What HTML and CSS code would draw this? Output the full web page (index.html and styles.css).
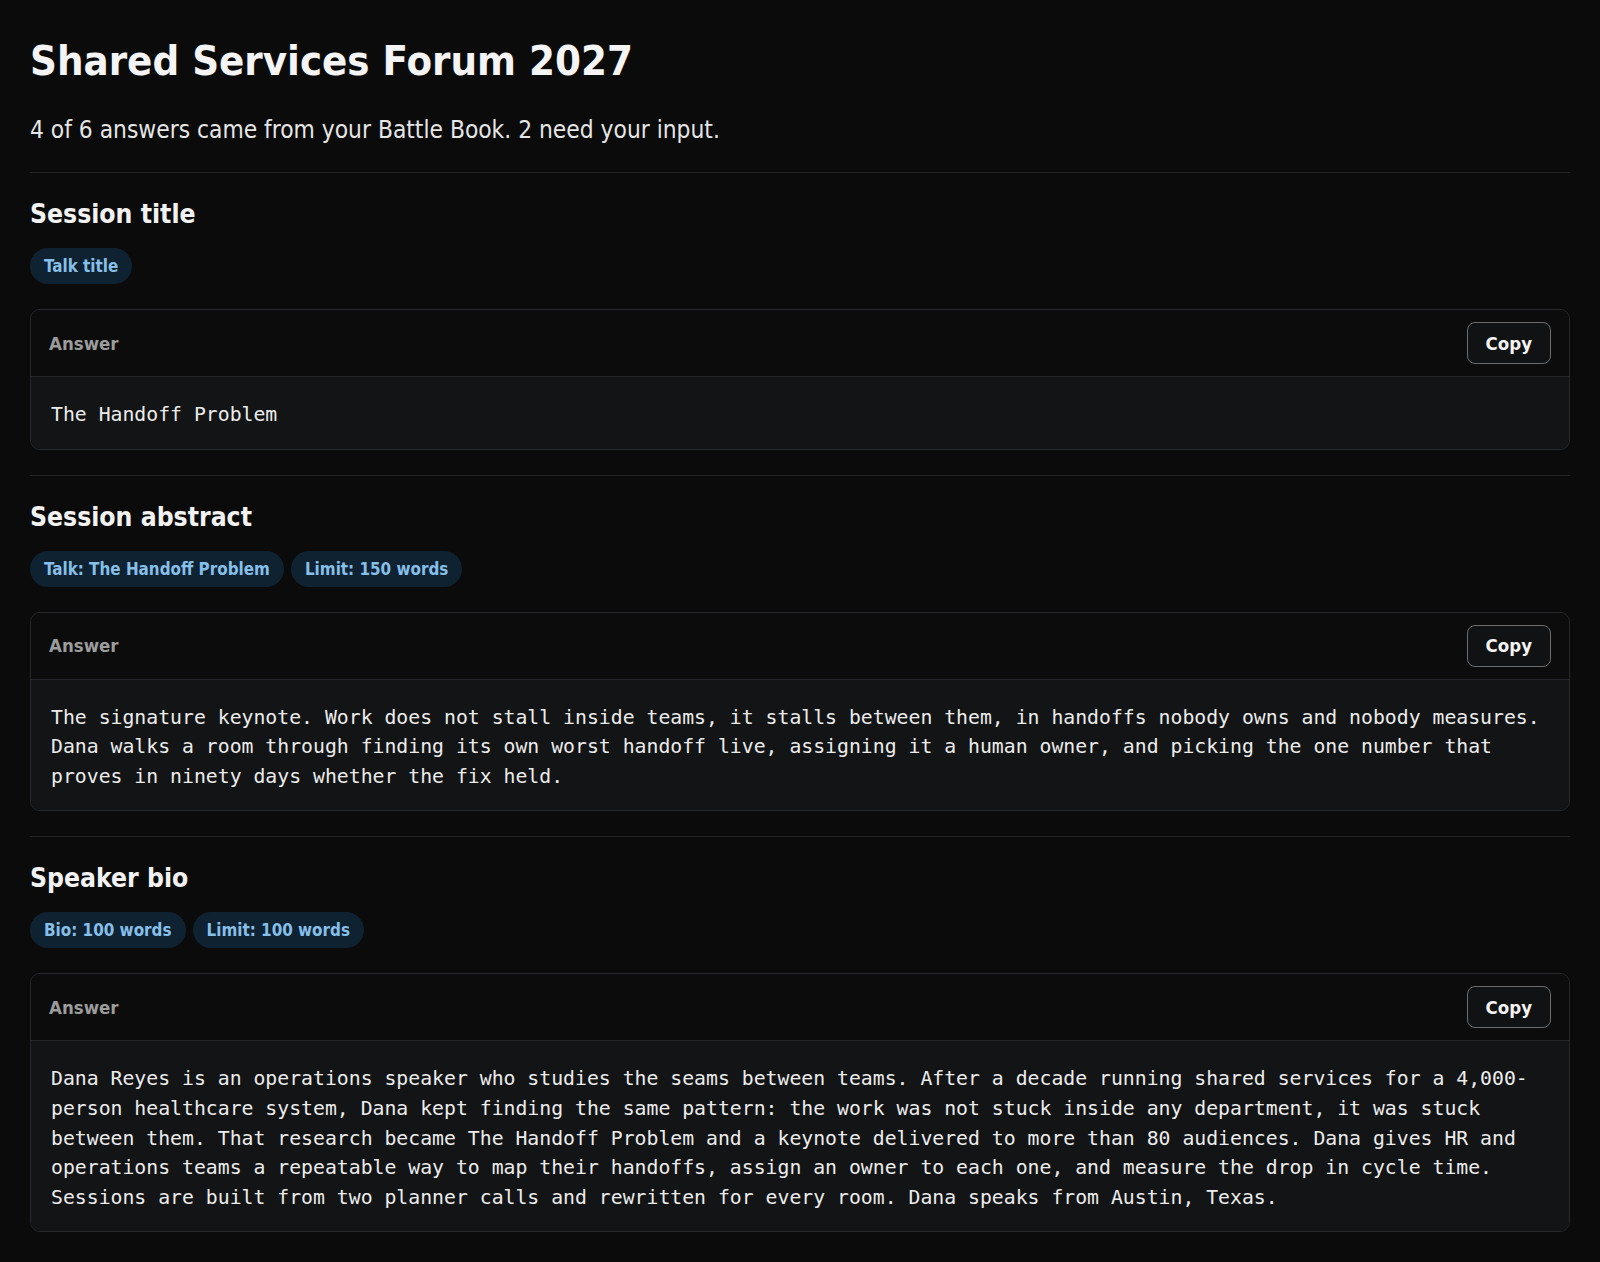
FILE: index.html
```html
<!DOCTYPE html>
<html lang="en">
<head>
   <meta charset="UTF-8">
   <title>Shared Services Forum 2027</title>
   <link rel="stylesheet" href="styles.css">
</head>
<body>
<header class="page-head">
   <h1 class="page-title">Shared Services Forum 2027</h1>
   <p class="page-sub">4 of 6 answers came from your Battle Book. 2 need your input.</p>
</header>

<section class="question">
   <h2 class="question-title">Session title</h2>
   <div class="tags">
      <span class="tag">Talk title</span>
   </div>
   <div class="answer">
      <div class="answer-head">
         <span class="answer-label">Answer</span>
         <button class="copy-btn" type="button">Copy</button>
      </div>
      <div class="answer-body">The Handoff Problem</div>
   </div>
</section>

<section class="question">
   <h2 class="question-title">Session abstract</h2>
   <div class="tags">
      <span class="tag">Talk: The Handoff Problem</span>
      <span class="tag">Limit: 150 words</span>
   </div>
   <div class="answer">
      <div class="answer-head">
         <span class="answer-label">Answer</span>
         <button class="copy-btn" type="button">Copy</button>
      </div>
      <div class="answer-body">The signature keynote. Work does not stall inside teams, it stalls between them, in handoffs nobody owns and nobody measures. Dana walks a room through finding its own worst handoff live, assigning it a human owner, and picking the one number that proves in ninety days whether the fix held.</div>
   </div>
</section>

<section class="question">
   <h2 class="question-title">Speaker bio</h2>
   <div class="tags">
      <span class="tag">Bio: 100 words</span>
      <span class="tag">Limit: 100 words</span>
   </div>
   <div class="answer">
      <div class="answer-head">
         <span class="answer-label">Answer</span>
         <button class="copy-btn" type="button">Copy</button>
      </div>
      <div class="answer-body">Dana Reyes is an operations speaker who studies the seams between teams. After a decade running shared services for a 4,000-person healthcare system, Dana kept finding the same pattern: the work was not stuck inside any department, it was stuck between them. That research became The Handoff Problem and a keynote delivered to more than 80 audiences. Dana gives HR and operations teams a repeatable way to map their handoffs, assign an owner to each one, and measure the drop in cycle time. Sessions are built from two planner calls and rewritten for every room. Dana speaks from Austin, Texas.</div>
   </div>
</section>
</body>
</html>
```

FILE: styles.css
```css
body {
   margin: 0;
   padding: 37px 30px 30px;
   background: #0b0b0b;
   color: #f2f2f2;
   font-family: "DejaVu Sans Condensed", "DejaVu Sans", sans-serif;
   font-stretch: condensed;
}

.page-head {
   padding-bottom: 27px;
}

.page-title {
   margin: 0;
   font-size: 41.5px;
   line-height: 48px;
   font-weight: 700;
   color: #f4f4f4;
}

.page-sub {
   margin: 30px 0 0;
   font-size: 24.3px;
   line-height: 30px;
   color: #e6e6e6;
}

.question {
   border-top: 1px solid #242424;
   padding: 24px 0 25px;
}

.question-title {
   margin: 0;
   font-size: 26.3px;
   line-height: 34px;
   font-weight: 700;
}

.tags {
   display: flex;
   gap: 7px;
   margin-top: 17px;
}

.tag {
   display: inline-block;
   height: 36px;
   line-height: 36px;
   padding: 0 14px;
   border-radius: 18px;
   background: #0f2232;
   color: #86bfe8;
   font-size: 16.9px;
   font-weight: 700;
}

.answer {
   margin-top: 25px;
   border: 1px solid #26282b;
   border-radius: 10px;
   overflow: hidden;
}

.answer-head {
   display: flex;
   justify-content: space-between;
   align-items: center;
   padding: 12px 18px;
   background: #0c0c0d;
   border-bottom: 1px solid #24262a;
}

.answer-label {
   font-size: 18.5px;
   font-weight: 700;
   color: #9c9c9c;
}

.copy-btn {
   height: 42px;
   padding: 0 18px;
   background: #111214;
   border: 1px solid #6c6c6c;
   border-radius: 8px;
   color: #f4f4f4;
   font-family: inherit;
   font-stretch: condensed;
   font-size: 18.5px;
   font-weight: 700;
}

.answer-body {
   padding: 23px 20px 19px;
   background: #131416;
   font-family: "DejaVu Sans Mono", monospace;
   font-size: 19.8px;
   line-height: 29.6px;
   color: #ececec;
}
```
